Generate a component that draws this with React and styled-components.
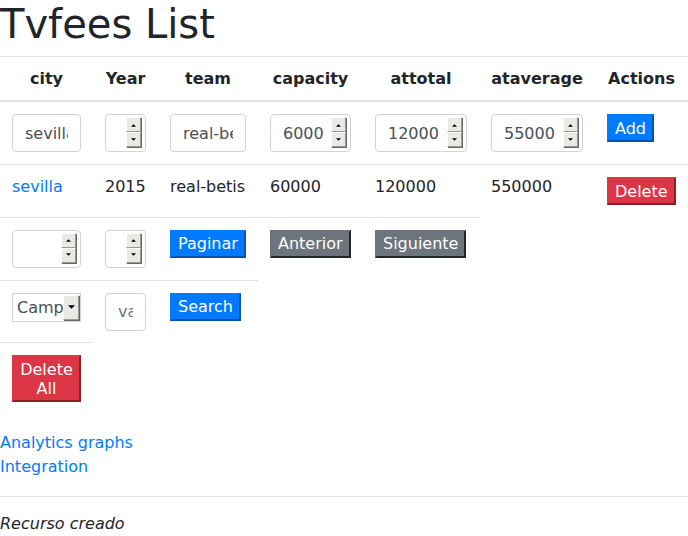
import React from "react";
import styled, { createGlobalStyle } from "styled-components";

const Global = createGlobalStyle`
  html, body { margin: 0; padding: 0; background: #fff; }
  body {
    font-family: "DejaVu Sans", "Liberation Sans", sans-serif;
    font-size: 16px;
    line-height: 1.5;
    color: #212529;
  }
  * { box-sizing: border-box; }
`;

const Title = styled.h1`
  margin: 0 0 8px;
  font-size: 40px;
  font-weight: 500;
  line-height: 1.2;
`;

const Table = styled.table`
  width: 100%;
  table-layout: fixed;
  border-collapse: collapse;
  margin-bottom: 17px;
  line-height: 19px;
`;

const Col = styled.col`
  width: ${(p) => p.$w}px;
`;

const Th = styled.th`
  padding: 12px;
  text-align: center;
  font-weight: bold;
  vertical-align: bottom;
  border-top: 1px solid #dee2e6;
  border-bottom: 2px solid #dee2e6;
`;

const Td = styled.td`
  padding: 12px;
  vertical-align: top;
  border-top: 1px solid #dee2e6;
  white-space: nowrap;
`;

const WrapTd = styled(Td)`
  white-space: normal;
`;

const TextInput = styled.input`
  display: block;
  width: 100%;
  height: 38px;
  padding: 6px 12px;
  font: inherit;
  font-size: 16px;
  line-height: 24px;
  color: #495057;
  background: #fff;
  border: 1px solid #ced4da;
  border-radius: 4px;
  outline: none;
  &::placeholder { color: #6c757d; }
`;

const NumberBox = styled.div`
  display: flex;
  align-items: flex-start;
  width: 100%;
  height: 38px;
  padding: 0 4px 0 12px;
  background: #fff;
  border: 1px solid #ced4da;
  border-radius: 4px;
`;

const NumberText = styled.input`
  flex: 1;
  min-width: 0;
  height: 36px;
  margin: 0 7px 0 0;
  padding: 0;
  border: none;
  outline: none;
  background: transparent;
  font: inherit;
  font-size: 16px;
  line-height: 24px;
  color: #495057;
  -moz-appearance: textfield;
  &::-webkit-inner-spin-button,
  &::-webkit-outer-spin-button { -webkit-appearance: none; margin: 0; }
`;

const Spinner = styled.div`
  flex: 0 0 15px;
  display: flex;
  flex-direction: column;
  margin-top: 2px;
  height: 30px;
`;

const SpinHalf = styled.div`
  flex: 1;
  display: flex;
  align-items: center;
  justify-content: center;
  background: #ebe9e6;
  border: 1px solid;
  border-color: #ffffff #9a9893 #9a9893 #ffffff;
  box-shadow: 1px 1px 0 #6a6864;
`;

const Arrow = ({ up, size = 5 }) => (
  <svg width={size} height={Math.ceil(size / 2) + 1} viewBox="0 0 6 4">
    <path d={up ? "M0 4 L3 1 L6 4 Z" : "M0 0 L6 0 L3 3 Z"} fill="#000" />
  </svg>
);

const NumberField = ({ value }) => (
  <NumberBox>
    <NumberText type="number" defaultValue={value} />
    <Spinner>
      <SpinHalf>
        <Arrow up />
      </SpinHalf>
      <SpinHalf>
        <Arrow />
      </SpinHalf>
    </Spinner>
  </NumberBox>
);

const SelectBox = styled.div`
  display: flex;
  width: 100%;
  height: 29px;
  padding: 1px;
  background: #fff;
  border: 1px solid #ced4da;
`;

const SelectText = styled.span`
  flex: 1;
  min-width: 0;
  overflow: hidden;
  white-space: nowrap;
  padding-left: 3px;
  line-height: 25px;
  color: #495057;
`;

const DropButton = styled.span`
  flex: 0 0 16px;
  display: flex;
  align-items: center;
  justify-content: center;
  background: #ebe9e6;
  border: 1px solid;
  border-color: #ffffff #9a9893 #9a9893 #ffffff;
  box-shadow: 1px 1px 0 #6a6864;
`;

const tones = {
  primary: "#007bff",
  secondary: "#6c757d",
  danger: "#dc3545",
};

const Button = styled.button`
  font-family: inherit;
  font-size: 16px;
  line-height: 19px;
  padding: 2.5px 6px;
  color: #fff;
  background: ${(p) => tones[p.$tone]};
  border: 2px outset ${(p) => tones[p.$tone]};
  border-radius: 0;
  cursor: pointer;
`;

const CityLink = styled.a`
  color: #007bff;
  text-decoration: none;
`;

const Links = styled.div`
  display: flex;
  flex-direction: column;
  align-items: flex-start;
`;

const NavLink = styled.a`
  color: #007bff;
  text-decoration: none;
  line-height: 24px;
`;

const Divider = styled.hr`
  margin: 17px 0 15px;
  border: 0;
  border-top: 1px solid rgba(0, 0, 0, 0.1);
`;

const Status = styled.em`
  display: block;
  line-height: 24px;
`;

const widths = [93, 65, 100, 105, 116, 116, 93];

export default function App() {
  return (
    <>
      <Global />
      <Title>Tvfees List</Title>
      <Table>
        <colgroup>
          {widths.map((w, i) => (
            <Col key={i} $w={w} />
          ))}
        </colgroup>
        <thead>
          <tr>
            <Th>city</Th>
            <Th>Year</Th>
            <Th>team</Th>
            <Th>capacity</Th>
            <Th>attotal</Th>
            <Th>ataverage</Th>
            <Th>Actions</Th>
          </tr>
        </thead>
        <tbody>
          <tr>
            <Td><TextInput defaultValue="sevilla" /></Td>
            <Td><NumberField value="" /></Td>
            <Td><TextInput defaultValue="real-betis" /></Td>
            <Td><NumberField value="60000" /></Td>
            <Td><NumberField value="120000" /></Td>
            <Td><NumberField value="550000" /></Td>
            <Td><Button $tone="primary">Add</Button></Td>
          </tr>
          <tr>
            <Td><CityLink href="#">sevilla</CityLink></Td>
            <Td>2015</Td>
            <Td>real-betis</Td>
            <Td>60000</Td>
            <Td>120000</Td>
            <Td>550000</Td>
            <Td><Button $tone="danger">Delete</Button></Td>
          </tr>
          <tr>
            <Td><NumberField value="" /></Td>
            <Td><NumberField value="" /></Td>
            <Td><Button $tone="primary">Paginar</Button></Td>
            <Td><Button $tone="secondary">Anterior</Button></Td>
            <Td><Button $tone="secondary">Siguiente</Button></Td>
          </tr>
          <tr>
            <Td>
              <SelectBox>
                <SelectText>Campo</SelectText>
                <DropButton><Arrow size={7} /></DropButton>
              </SelectBox>
            </Td>
            <Td><TextInput placeholder="value" /></Td>
            <Td><Button $tone="primary">Search</Button></Td>
          </tr>
          <tr>
            <WrapTd><Button $tone="danger">Delete All</Button></WrapTd>
          </tr>
        </tbody>
      </Table>
      <Links>
        <NavLink href="#">Analytics graphs</NavLink>
        <NavLink href="#">Integration</NavLink>
      </Links>
      <Divider />
      <Status>Recurso creado</Status>
    </>
  );
}
